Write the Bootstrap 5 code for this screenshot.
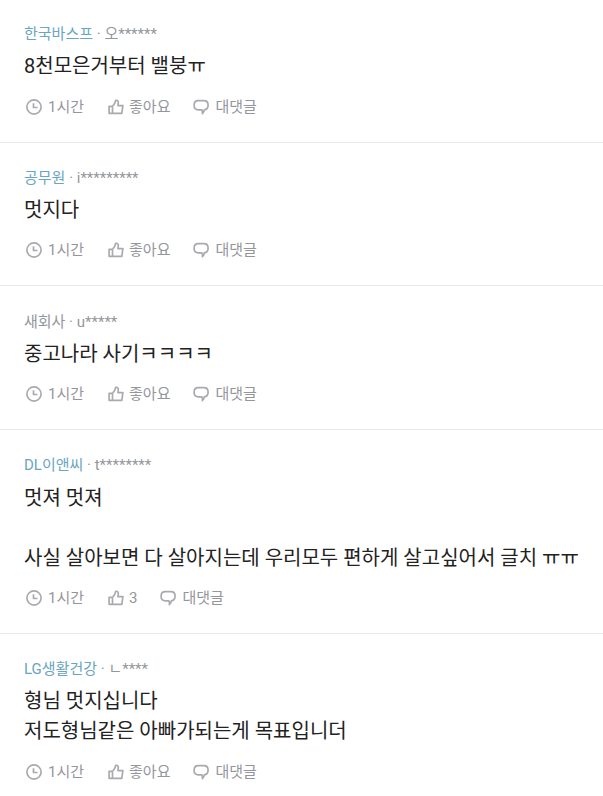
<!DOCTYPE html>
<html lang="ko">
<head>
<meta charset="utf-8">
<meta name="viewport" content="width=device-width, initial-scale=1">
<title>댓글</title>
<link href="https://cdn.jsdelivr.net/npm/bootstrap@5.3.0/dist/css/bootstrap.min.css" rel="stylesheet">
<style>
body{font-family:Roboto,"Noto Sans CJK KR",sans-serif;color:#222;overflow:hidden}
main{margin-top:-1px}
.cmt{padding:25.2px 0 0 24px;border-bottom:1px solid #eaeaea;height:143.7px}
.cmt-3{height:204px}
.cmt-2{height:174px}
.who{font-size:15px;line-height:20px;color:#94969b}
.who a{color:#6aa5c2}
.msg{font-size:20px;line-height:30px;margin-top:7.2px}
.meta{font-size:15px;line-height:20px;color:#94969b;margin-top:15.3px;gap:22px}
.cmt-3 .msg{margin-top:8px}
.cmt-3 .meta{margin-top:14.5px}
.meta span{gap:4px}
.meta span+span{gap:3px}
.meta span:last-child{gap:4px;margin-left:-1px}
.meta svg{width:20px;height:20px;fill:none;stroke:#a9aaae;stroke-width:1.7;stroke-linejoin:round}
</style>
</head>
<body>
<svg class="d-none" xmlns="http://www.w3.org/2000/svg">
<symbol id="clock" viewBox="0 0 20 20"><circle cx="10" cy="10" r="7.1"/><path d="M9.500 6.300v4.200h4"/></symbol>
<symbol id="like" viewBox="0 0 20 20"><path d="M3.100 9.300h3.400v7H3.100zM6.500 9.300C8.500 7.700 9.200 6 9.700 3.300c1.900-.3 2.700.8 2.600 2.200L12 8.600h4.900l-1.100 7.700H6.500"/></symbol>
<symbol id="reply" viewBox="0 0 20 20"><path d="M7.400 3.700h5.400c2.600 0 4.300 1.900 4.300 4.600 0 2.500-1.500 4.300-3.800 4.600-.1 1.600-.7 2.700-1.900 3.700.2-1.500 0-2.600-.5-3.700H7.400C4.800 12.900 3.100 11 3.100 8.300S4.800 3.700 7.400 3.700z"/></symbol>
</svg>
<main>
<article class="cmt"><div class="who"><a class="text-decoration-none">한국바스프</a> · 오******</div><div class="msg">8천모은거부터 밸붕ㅠ</div>
<div class="meta d-flex"><span class="d-flex"><svg><use href="#clock"/></svg>1시간</span><span class="d-flex"><svg><use href="#like"/></svg>좋아요</span><span class="d-flex"><svg><use href="#reply"/></svg>대댓글</span></div></article>
<article class="cmt"><div class="who"><a class="text-decoration-none">공무원</a> · i*********</div><div class="msg">멋지다</div>
<div class="meta d-flex"><span class="d-flex"><svg><use href="#clock"/></svg>1시간</span><span class="d-flex"><svg><use href="#like"/></svg>좋아요</span><span class="d-flex"><svg><use href="#reply"/></svg>대댓글</span></div></article>
<article class="cmt"><div class="who">새회사 · u*****</div><div class="msg">중고나라 사기ㅋㅋㅋㅋ</div>
<div class="meta d-flex"><span class="d-flex"><svg><use href="#clock"/></svg>1시간</span><span class="d-flex"><svg><use href="#like"/></svg>좋아요</span><span class="d-flex"><svg><use href="#reply"/></svg>대댓글</span></div></article>
<article class="cmt cmt-3"><div class="who"><a class="text-decoration-none">DL이앤씨</a> · t********</div><div class="msg">멋져 멋져<br><br>사실 살아보면 다 살아지는데 우리모두 편하게 살고싶어서 글치 ㅠㅠ</div>
<div class="meta d-flex"><span class="d-flex"><svg><use href="#clock"/></svg>1시간</span><span class="d-flex"><svg><use href="#like"/></svg>3</span><span class="d-flex"><svg><use href="#reply"/></svg>대댓글</span></div></article>
<article class="cmt cmt-2"><div class="who"><a class="text-decoration-none">LG생활건강</a> · ㄴ****</div><div class="msg">형님 멋지십니다<br>저도형님같은 아빠가되는게 목표입니더</div>
<div class="meta d-flex"><span class="d-flex"><svg><use href="#clock"/></svg>1시간</span><span class="d-flex"><svg><use href="#like"/></svg>좋아요</span><span class="d-flex"><svg><use href="#reply"/></svg>대댓글</span></div></article>
</main>
<script src="https://cdn.jsdelivr.net/npm/bootstrap@5.3.0/dist/js/bootstrap.bundle.min.js"></script>
</body>
</html>
